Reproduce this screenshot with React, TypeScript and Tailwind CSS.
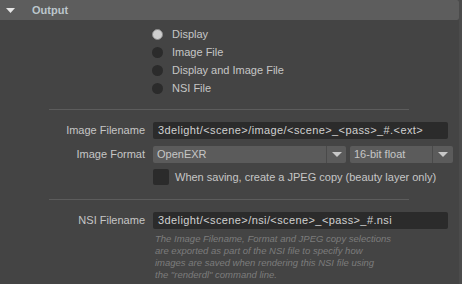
import React from "react";

function Radio({ label, checked }: { label: string; checked?: boolean }) {
  return (
    <div className="h-[18px] flex items-center gap-[9px]">
      {checked ? (
        <div className="w-[11px] h-[11px] rounded-full bg-[#cfcfcf] border border-[#8c8c8c]" />
      ) : (
        <div className="w-[11px] h-[11px] rounded-full bg-[#2b2b2b]" />
      )}
      <span className="text-[11px] text-[#c6c6c6] leading-none">{label}</span>
    </div>
  );
}

function Arrow() {
  return (
    <svg width="10" height="5" viewBox="0 0 10 5">
      <polygon points="0,0 10,0 5,5" fill="#c8c8c8" />
    </svg>
  );
}

function Dropdown({ text, w, aw }: { text: string; w: string; aw: string }) {
  return (
    <div className={`${w} h-[17px] bg-[#5b5b5b] rounded-[2px] flex`}>
      <div className="flex-1 flex items-center pl-[4px] text-[11px] text-[#c6c6c6]">{text}</div>
      <div className="w-px bg-[#4a4a4a]" />
      <div className={`${aw} flex items-center justify-center`}>
        <Arrow />
      </div>
    </div>
  );
}

export default function App() {
  return (
    <div className="w-[462px] h-[284px] bg-[#444444] overflow-hidden flex font-['Liberation_Sans',Arial,sans-serif]">
      <div className="w-[459px] flex flex-col">
        <div className="h-[20px] bg-[#5d5d5d] rounded-r-[2px] flex items-center">
          <svg className="ml-[6px]" width="9" height="5" viewBox="0 0 9 5">
            <polygon points="0,0 9,0 4.5,5" fill="#e6e6e6" />
          </svg>
          <span className="ml-[17px] text-[11px] font-bold text-[#bcc6cc]">Output</span>
        </div>

        <div className="pt-[5px] pl-[152px] flex flex-col">
          <Radio label="Display" checked />
          <Radio label="Image File" />
          <Radio label="Display and Image File" />
          <Radio label="NSI File" />
        </div>

        <div className="mt-[12px] ml-[49px] w-[360px] h-px bg-[#5c5c5c]" />

        <div className="mt-[12px] flex items-center gap-[8px]">
          <div className="w-[145px] text-right text-[11px] text-[#c6c6c6]">Image Filename</div>
          <div className="w-[295px] h-[17px] bg-[#2b2b2b] rounded-[2px] flex items-center pl-[5px] text-[11px] tracking-[0.4px] text-[#d0d0d0]">
            3delight/&lt;scene&gt;/image/&lt;scene&gt;_&lt;pass&gt;_#.&lt;ext&gt;
          </div>
        </div>

        <div className="mt-[7px] flex items-center gap-[8px]">
          <div className="w-[145px] text-right text-[11px] text-[#c6c6c6]">Image Format</div>
          <div className="flex gap-[4px]">
            <Dropdown text="OpenEXR" w="w-[193px]" aw="w-[19px]" />
            <Dropdown text="16-bit float" w="w-[103px]" aw="w-[20px]" />
          </div>
        </div>

        <div className="mt-[6px] flex items-center pl-[153px] gap-[6px]">
          <div className="w-[16px] h-[16px] bg-[#2b2b2b] rounded-[2px]" />
          <span className="text-[11px] text-[#c6c6c6]">When saving, create a JPEG copy (beauty layer only)</span>
        </div>

        <div className="mt-[13px] ml-[49px] w-[360px] h-px bg-[#5c5c5c]" />

        <div className="mt-[12px] flex items-center gap-[8px]">
          <div className="w-[145px] text-right text-[11px] text-[#c6c6c6]">NSI Filename</div>
          <div className="w-[295px] h-[17px] bg-[#2b2b2b] rounded-[2px] flex items-center pl-[5px] text-[11px] tracking-[0.4px] text-[#d0d0d0]">
            3delight/&lt;scene&gt;/nsi/&lt;scene&gt;_&lt;pass&gt;_#.nsi
          </div>
        </div>

        <div className="mt-[4px] pl-[155px] text-[9.5px] leading-[12px] italic text-[#7c7c7c]">
          The Image Filename, Format and JPEG copy selections
          <br />
          are exported as part of the NSI file to specify how
          <br />
          images are saved when rendering this NSI file using
          <br />
          the "renderdl" command line.
        </div>
      </div>
      <div className="w-[3px] bg-[#4b4b4b]" />
    </div>
  );
}
